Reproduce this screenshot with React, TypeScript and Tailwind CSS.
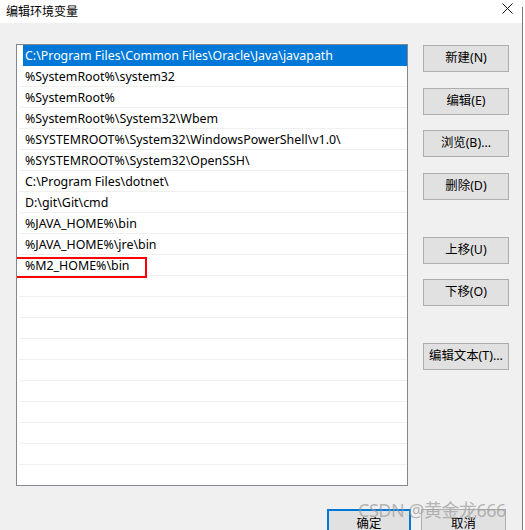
import React from "react";

const paths = [
  "C:\\Program Files\\Common Files\\Oracle\\Java\\javapath",
  "%SystemRoot%\\system32",
  "%SystemRoot%",
  "%SystemRoot%\\System32\\Wbem",
  "%SYSTEMROOT%\\System32\\WindowsPowerShell\\v1.0\\",
  "%SYSTEMROOT%\\System32\\OpenSSH\\",
  "C:\\Program Files\\dotnet\\",
  "D:\\git\\Git\\cmd",
  "%JAVA_HOME%\\bin",
  "%JAVA_HOME%\\jre\\bin",
  "%M2_HOME%\\bin",
];

const font = { fontFamily: '"Noto Sans", "Noto Sans CJK SC", sans-serif' };

function Btn({ label, className = "" }: { label: string; className?: string }) {
  return (
    <div
      className={
        "shrink-0 w-[86px] h-[27px] border border-[#adadad] bg-[#e1e1e1] flex items-center justify-center text-[12.4px] text-black " +
        className
      }
    >
      {label}
    </div>
  );
}

export default function App() {
  const rows = Array.from({ length: 21 }, (_, i) => paths[i] ?? "");

  return (
    <div
      className="relative w-[525px] h-[530px] overflow-hidden bg-[#f0f0f0] flex"
      style={font}
    >
      <div className="w-[522px] flex flex-col">
        {/* title bar */}
        <div className="shrink-0 h-[23px] bg-white flex items-center justify-between pl-[6px] pr-[9px]">
          <span className="text-[12px] text-black leading-none">编辑环境变量</span>
          <svg width="11" height="11" viewBox="0 0 11 11" className="mb-[6px]">
            <path d="M0.5 0.5 L10.5 10.5 M10.5 0.5 L0.5 10.5" stroke="#111" strokeWidth="1" />
          </svg>
        </div>

        <div className="shrink-0 flex pl-[16px] pt-[21px]">
          {/* list box */}
          <div className="shrink-0 w-[392px] h-[442px] border border-[#828790] bg-white overflow-hidden pl-[1px]">
            {rows.map((p, i) => (
              <div
                key={i}
                className="relative ml-[1px] h-[21px] border-b border-[#f0f0f0] flex"
              >
                {i === 0 ? (
                  <div className="ml-[4px] flex-1 bg-[#0078d7] text-white text-[12.4px] leading-[21px] pl-[2px] -mb-[1px] h-[21px]">
                    {p}
                  </div>
                ) : (
                  <div className="pl-[6px] text-[12.4px] text-black leading-[21px]">{p}</div>
                )}
                {i === 10 && (
                  <div className="absolute left-[-4px] top-[2px] w-[132px] h-[21px] border-2 border-[#ff0000]" />
                )}
              </div>
            ))}
          </div>

          {/* side buttons */}
          <div className="ml-[15px] flex flex-col">
            <Btn label="新建(N)" className="mt-[1px]" />
            <Btn label="编辑(E)" className="mt-[16px]" />
            <Btn label="浏览(B)..." className="mt-[15px]" />
            <Btn label="删除(D)" className="mt-[16px]" />
            <Btn label="上移(U)" className="mt-[37px]" />
            <Btn label="下移(O)" className="mt-[15px]" />
            <Btn label="编辑文本(T)..." className="mt-[37px]" />
          </div>
        </div>

        {/* bottom buttons */}
        <div className="shrink-0 flex pl-[327px] mt-[23px] gap-[10px]">
          <div className="w-[84px] h-[27px] border-2 border-[#0078d7] bg-[#e1e1e1] flex items-center justify-center text-[12.4px] text-black pt-[3px]">
            确定
          </div>
          <div className="w-[85px] h-[27px] border border-[#adadad] bg-[#e1e1e1] flex items-center justify-center text-[12.4px] text-black pt-[3px]">
            取消
          </div>
        </div>
      </div>

      <div className="w-[1px] mt-[7px] bg-[#7a7a7a]" />
      <div className="w-[2px] bg-white" />

      {/* watermark */}
      <div className="absolute left-[358px] top-[501px] text-[18px] leading-none text-[#9a9a9a]/70 tracking-[-0.5px]">
        CSDN @黄金龙666
      </div>
    </div>
  );
}
